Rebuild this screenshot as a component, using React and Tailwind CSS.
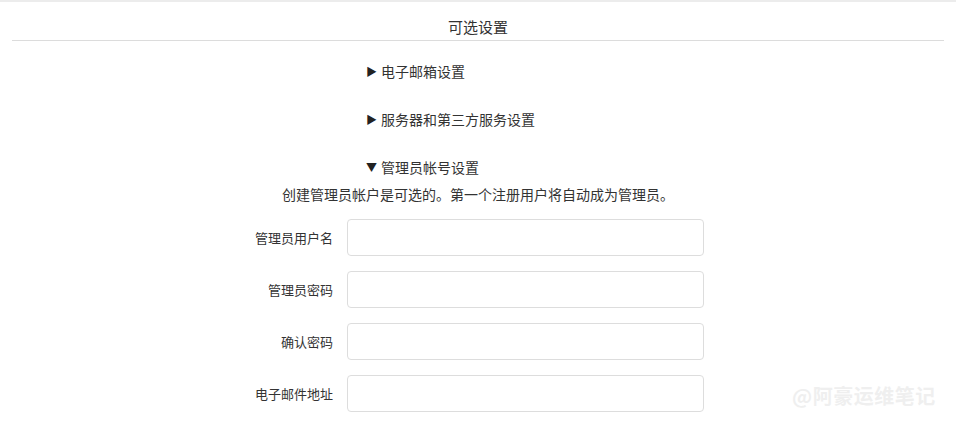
import React from "react";

const fields = ["管理员用户名", "管理员密码", "确认密码", "电子邮件地址"];

function Section({ open, title }) {
  return (
    <div className="flex items-center h-5 leading-5">
      <span className="w-[15px] text-[11px] text-[#222] -ml-px">{open ? "▼" : "▶"}</span>
      <span className="text-[14px] text-[#333]">{title}</span>
    </div>
  );
}

export default function App() {
  return (
    <div
      className="relative w-[956px] h-[424px] bg-white overflow-hidden text-[#333]"
      style={{ fontFamily: '"Noto Sans CJK SC", "Noto Sans", sans-serif' }}
    >
      <div className="h-[2px] bg-[#ececec]" />

      {/* header */}
      <div className="mx-3 pt-[15px] pb-[3px] border-b border-[#dcdcdc] text-center text-[15px] leading-5">
        可选设置
      </div>

      <div className="w-[480px] mx-auto">
        <div className="pl-[129px] mt-[20px] flex flex-col gap-[28px]">
          <Section title="电子邮箱设置" />
          <Section title="服务器和第三方服务设置" />
          <Section open title="管理员帐号设置" />
        </div>
      </div>

      <p className="mt-[7px] text-center text-[14px] leading-5">
        创建管理员帐户是可选的。第一个注册用户将自动成为管理员。
      </p>

      <div className="w-[480px] mx-auto mt-[15px] flex flex-col gap-[15px]">
        {fields.map((f) => (
          <div key={f} className="flex items-center gap-[14px]">
            <label className="w-[95px] text-right text-[13px] leading-5 text-[#333]">{f}</label>
            <input
              type="text"
              className="w-[357px] h-[37px] rounded-[4px] border border-[#dddddd] bg-white outline-none"
            />
          </div>
        ))}
      </div>

      {/* watermark */}
      <div className="absolute left-[792px] top-[384px] text-[20px] leading-6 font-bold text-[#efefef] tracking-[0.5px]">
        @阿豪运维笔记
      </div>
    </div>
  );
}
